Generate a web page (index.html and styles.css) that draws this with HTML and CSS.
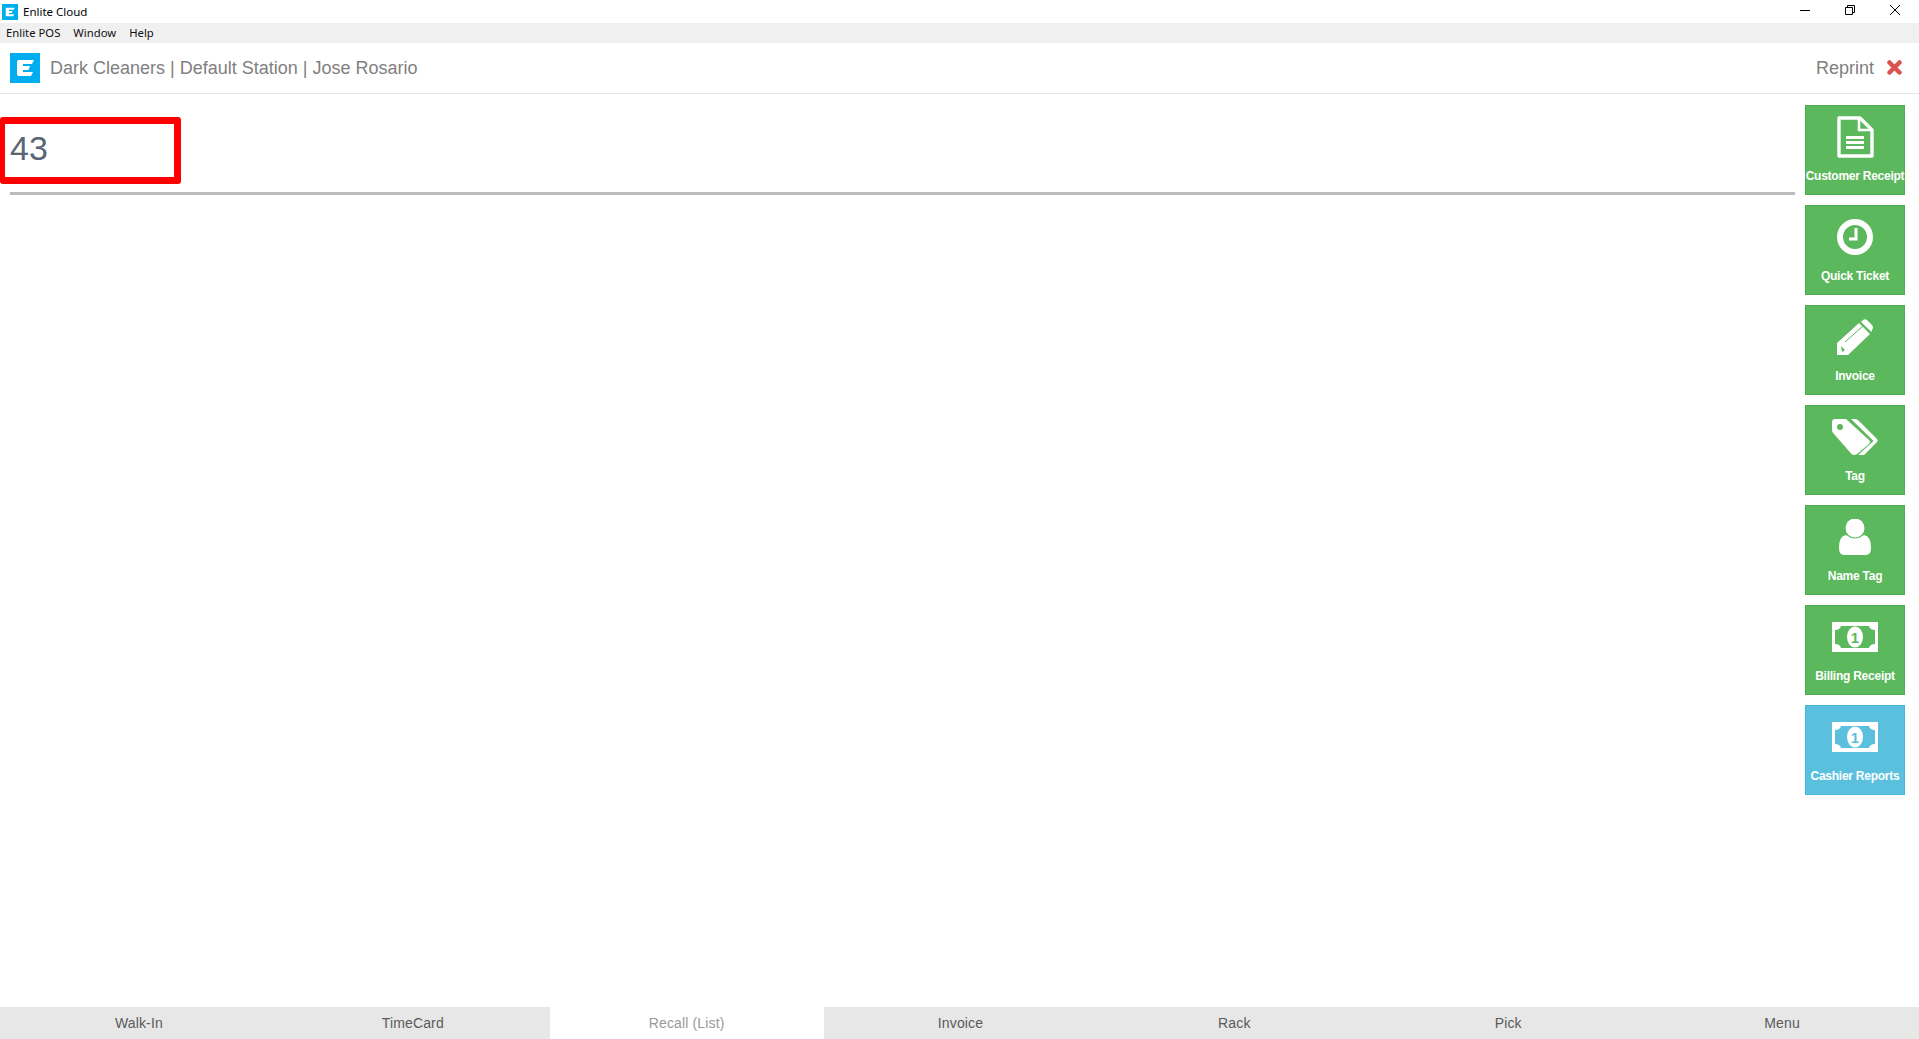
FILE: index.html
```html
<!DOCTYPE html>
<html lang="en">
<head>
<meta charset="utf-8">
<title>Enlite Cloud</title>
<link rel="stylesheet" href="styles.css">
</head>
<body>
<div class="app">
  <div class="titlebar">
    <svg class="title-logo" viewBox="0 0 30 30"><rect width="30" height="30" fill="#00aeef"/><path d="M9 7H24L22 11H13V13H20L18.500 17H13V19H23L21 23H9Q7 23 7 21V9Q7 7 9 7Z" fill="#fff"/></svg>
    <span class="title-text">Enlite Cloud</span>
    <div class="win-controls">
      <svg class="win-icon" viewBox="0 0 12 12"><path d="M1 6.500H11" stroke="#000" fill="none"/></svg>
      <svg class="win-icon" viewBox="0 0 12 12"><path d="M1.500 3.500H8.500V10.500H1.500ZM3.500 3.500V1.500H10.500V8.500H8.500" stroke="#000" fill="none"/></svg>
      <svg class="win-icon" viewBox="0 0 12 12"><path d="M1 1L11 11M11 1L1 11" stroke="#000" fill="none"/></svg>
    </div>
  </div>
  <nav class="menubar"><span>Enlite POS</span><span>Window</span><span>Help</span></nav>
  <header class="header">
    <svg class="logo" viewBox="0 0 30 30"><rect width="30" height="30" fill="#00aeef"/><path d="M9 7H24L22 11H13V13H20L18.500 17H13V19H23L21 23H9Q7 23 7 21V9Q7 7 9 7Z" fill="#fff"/></svg>
    <span class="header-title">Dark Cleaners | Default Station | Jose Rosario</span>
    <span class="reprint">Reprint</span>
    <svg class="close-x" viewBox="0 0 15 15"><path d="M2.500 2.500L12.500 12.500M12.500 2.500L2.500 12.500" stroke="#d9534f" stroke-width="4.500" stroke-linecap="round" fill="none"/></svg>
  </header>
  <main class="main">
    <section class="content">
      <div class="search-box">43</div>
      <div class="rule"></div>
    </section>
    <aside class="sidebar">
      <button class="action green">
        <span class="icon-slot"><svg width="37" height="42" viewBox="0 0 37 42"><path d="M2 2H23L35 14V40H2Z" fill="none" stroke="#fff" stroke-width="3.400" stroke-linejoin="round"/><path d="M22 2V14H35" fill="none" stroke="#fff" stroke-width="2.500"/><path d="M9 21.500H27M9 26.500H27M9 31.500H27" stroke="#fff" stroke-width="2.800"/></svg></span>
        <span class="label">Customer Receipt</span>
      </button>
      <button class="action green">
        <span class="icon-slot"><svg width="36" height="36" viewBox="0 0 36 36"><circle cx="18" cy="18" r="15" fill="none" stroke="#fff" stroke-width="6"/><path d="M19 9V20H12" fill="none" stroke="#fff" stroke-width="3"/></svg></span>
        <span class="label">Quick Ticket</span>
      </button>
      <button class="action green">
        <span class="icon-slot"><svg width="37" height="36" viewBox="0 0 37 36"><path d="M0 36V24L22 4L33 15L11 36Z" fill="#fff"/><path d="M24 3L26 1Q28 -0.500 30 1L35 6Q37 8.500 35 11L34.500 13Z" fill="#fff"/><path d="M8 23L26 7" stroke="#5cb85c" stroke-width="1"/><path d="M4 27L8 31L5 33Z" fill="#5cb85c"/></svg></span>
        <span class="label">Invoice</span>
      </button>
      <button class="action green">
        <span class="icon-slot"><svg width="46" height="36" viewBox="0 0 46 36"><path fill-rule="evenodd" d="M3 0H14L37 21Q39 23 37 25L25 35Q22 37 19.500 35L2 15Q0 13 0 11V3Q0 0 3 0ZM8 5A3 3 0 1 0 8 11A3 3 0 1 0 8 5Z" fill="#fff"/><path d="M19 0H23Q25 0 27 2L45 20Q46 22 45 23L32 36Q30 37 26 36L41.500 22Z" fill="#fff"/></svg></span>
        <span class="label">Tag</span>
      </button>
      <button class="action green">
        <span class="icon-slot"><svg width="32" height="36" viewBox="0 0 32 36"><circle cx="16" cy="9" r="9.500" fill="#fff"/><path d="M0 29Q0 17 7 16Q16 23 25 16Q32 17 32 29Q32 36 27 36H5Q0 36 0 29Z" fill="#fff"/></svg></span>
        <span class="label">Name Tag</span>
      </button>
      <button class="action green">
        <span class="icon-slot"><svg class="money" width="46" height="30" viewBox="0 0 46 30"><rect width="46" height="30" fill="#fff"/><path class="cut" d="M9 4H37Q38 8 43 8V22Q38 22 37 26H9Q8 22 3 22V8Q8 8 9 4Z"/><ellipse cx="23" cy="15" rx="8" ry="10.500" fill="#fff"/><text class="one" x="23" y="20.500" text-anchor="middle">1</text></svg></span>
        <span class="label">Billing Receipt</span>
      </button>
      <button class="action blue">
        <span class="icon-slot"><svg class="money" width="46" height="30" viewBox="0 0 46 30"><rect width="46" height="30" fill="#fff"/><path class="cut" d="M9 4H37Q38 8 43 8V22Q38 22 37 26H9Q8 22 3 22V8Q8 8 9 4Z"/><ellipse cx="23" cy="15" rx="8" ry="10.500" fill="#fff"/><text class="one" x="23" y="20.500" text-anchor="middle">1</text></svg></span>
        <span class="label">Cashier Reports</span>
      </button>
    </aside>
  </main>
  <footer class="tabs">
    <div class="tab">Walk-In</div>
    <div class="tab">TimeCard</div>
    <div class="tab active">Recall (List)</div>
    <div class="tab">Invoice</div>
    <div class="tab">Rack</div>
    <div class="tab">Pick</div>
    <div class="tab">Menu</div>
  </footer>
</div>
</body>
</html>
```

FILE: styles.css
```css
* { box-sizing: border-box; }
html, body { margin: 0; height: 100%; background: #fff; overflow: hidden; }
.app { height: 100vh; display: flex; flex-direction: column; font-family: "Liberation Sans", Arial, sans-serif; }

.titlebar { height: 23px; flex: none; display: flex; align-items: center; padding-left: 2px; }
.title-logo { width: 16px; height: 16px; }
.title-text { margin-left: 5px; font: 11.500px "Noto Sans", sans-serif; color: #000; }
.win-controls { margin-left: auto; display: flex; gap: 33px; padding: 0 18px 3px 0; }
.win-icon { width: 12px; height: 12px; display: block; }

.menubar { height: 20px; flex: none; background: #f0f0f0; display: flex; align-items: center; gap: 13px; padding: 0 0 2px 6px; font: 11.300px "Noto Sans", sans-serif; color: #111; }

.header { height: 51px; flex: none; display: flex; align-items: center; padding: 0 17px 0 10px; border-bottom: 1px solid #e7e7e7; }
.logo { width: 30px; height: 30px; }
.header-title { margin-left: 10px; font-size: 18px; color: #808080; }
.reprint { margin-left: auto; font-size: 18px; color: #808080; }
.close-x { width: 15px; height: 15px; margin: 0 0 2px 13px; }

.main { flex: 1; min-height: 0; display: flex; }
.content { flex: 1; min-width: 0; padding-top: 23px; }
.search-box { width: 181px; height: 67px; border: 7px solid #f00; border-left-width: 5px; border-radius: 3px; padding-left: 5px; font-size: 34px; line-height: 48px; color: #5a6672; }
.rule { height: 3px; margin: 8px 0 0 10px; background: #bbb; }

.sidebar { flex: none; width: 124px; padding: 11px 14px 0 10px; display: flex; flex-direction: column; gap: 10px; }
.action { width: 100px; height: 90px; padding: 9px 0 0; border: 1px solid; display: flex; flex-direction: column; align-items: center; color: #fff; font-family: "Liberation Sans", Arial, sans-serif; }
.action.green { background: #5cb85c; border-color: #4cae4c; --cut: #5cb85c; }
.action.blue { background: #5bc0de; border-color: #46b8da; --cut: #5bc0de; }
.icon-slot { height: 43px; display: flex; align-items: center; justify-content: center; flex: none; }
.icon-slot svg { display: block; }
.money .cut { fill: var(--cut); }
.money .one { fill: var(--cut); font: bold 15px "Liberation Sans", sans-serif; }
.label { margin-top: 10px; font-size: 12px; font-weight: bold; line-height: 16px; letter-spacing: -0.25px; white-space: nowrap; }

.tabs { height: 32px; flex: none; display: grid; grid-template-columns: repeat(7, 1fr); padding-left: 2px; background: #e7e7e7; }
.tab { display: flex; align-items: center; justify-content: center; font-size: 14px; letter-spacing: 0.15px; color: #5a5a5a; }
.tab.active { background: #fff; color: #999; }
```
